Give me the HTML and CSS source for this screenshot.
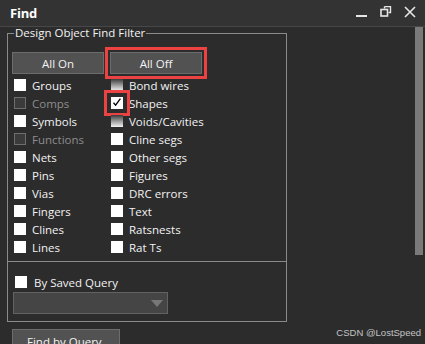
FILE: index.html
```html
<!DOCTYPE html>
<html>
<head>
	<meta charset="utf-8">
	<title>Find</title>
	<link rel="stylesheet" href="styles.css">
</head>
<body>
	<div class="win">
		<div class="titlebar">
			<span class="title">Find</span>
			<span class="tb-btns">
				<svg width="12" height="12" viewBox="0 0 12 12"><rect x="0" y="9" width="11" height="2" fill="#e6e6e6"/></svg>
				<svg width="12" height="12" viewBox="0 0 12 12"><path d="M4.5 0.5h6v6h-2M4.5 0.5v2" fill="none" stroke="#e6e6e6" stroke-width="1.4"/><rect x="1" y="3.5" width="6.5" height="6.5" fill="none" stroke="#e6e6e6" stroke-width="1.6"/></svg>
				<svg width="12" height="12" viewBox="0 0 12 12"><path d="M1 1l10 10M11 1L1 11" stroke="#e6e6e6" stroke-width="1.6"/></svg>
			</span>
		</div>
		<div class="body">
			<div class="main">
				<fieldset class="filter">
					<legend>Design Object Find Filter</legend>
					<div class="btn-row">
						<button class="btn">All On</button>
						<button class="btn mark">All Off</button>
					</div>
					<div class="checks">
						<label class="chk"><i class="box"></i>Groups</label>
						<label class="chk"><i class="box fade"></i>Bond wires</label>
						<label class="chk off"><i class="box"></i>Comps</label>
						<label class="chk"><i class="box on mark"></i>Shapes</label>
						<label class="chk"><i class="box"></i>Symbols</label>
						<label class="chk"><i class="box fade"></i>Voids/Cavities</label>
						<label class="chk off"><i class="box"></i>Functions</label>
						<label class="chk"><i class="box"></i>Cline segs</label>
						<label class="chk"><i class="box"></i>Nets</label>
						<label class="chk"><i class="box"></i>Other segs</label>
						<label class="chk"><i class="box"></i>Pins</label>
						<label class="chk"><i class="box"></i>Figures</label>
						<label class="chk"><i class="box"></i>Vias</label>
						<label class="chk"><i class="box"></i>DRC errors</label>
						<label class="chk"><i class="box"></i>Fingers</label>
						<label class="chk"><i class="box"></i>Text</label>
						<label class="chk"><i class="box"></i>Clines</label>
						<label class="chk"><i class="box"></i>Ratsnests</label>
						<label class="chk"><i class="box"></i>Lines</label>
						<label class="chk"><i class="box"></i>Rat Ts</label>
					</div>
				</fieldset>
				<div class="query">
					<label class="chk"><i class="box"></i>By Saved Query</label>
					<div class="combo"><span class="arrow"></span></div>
				</div>
				<button class="btn find">Find by Query</button>
			</div>
			<div class="scroll"><div class="thumb"></div></div>
		</div>
		<div class="credit">CSDN @LostSpeed</div>
	</div>
</body>
</html>
```

FILE: styles.css
```css
*{
	box-sizing: border-box;
}
body{
	margin: 0;
	background: #2c2c2c;
	font-family: "Open Sans", "Noto Sans", sans-serif;
	font-size: 11.5px;
	color: #f2f2f2;
}
.win{
	position: relative;
	width: 425px;
	height: 344px;
	overflow: hidden;
	background: #2c2c2c;
}
.titlebar{
	height: 27px;
	display: flex;
	align-items: center;
	justify-content: space-between;
	padding: 0 9px 1px 10px;
	background: #333;
	border-bottom: 1px solid #474747;
}
.title{
	font-weight: bold;
	font-size: 13px;
	letter-spacing: -0.2px;
	color: #fff;
}
.tb-btns{
	display: flex;
	gap: 12px;
	margin-top: -2px;
}
.tb-btns svg{
	display: block;
}
.body{
	display: flex;
}
.main{
	flex: 1;
}
.filter{
	margin: 0 0 0 7px;
	padding: 0 0 5px 0;
	width: 280px;
	border: 1px solid #8a8a8a;
	min-inline-size: 0;
}
.filter legend{
	margin-left: 6px;
	padding: 0 1px;
	line-height: 12px;
}
.btn-row{
	display: flex;
	gap: 6px;
	margin: 13px 0 0 4px;
}
.btn{
	font-family: inherit;
	font-size: 11.5px;
	color: #f2f2f2;
	background: #525252;
	border: 1px solid #6c6c6c;
	height: 22px;
	padding: 0;
}
.btn-row .btn{
	width: 92px;
}
.mark{
	outline: 3px solid #ec4242;
	outline-offset: 1px;
}
.btn.mark{
	outline-offset: 2px;
}
.checks{
	display: grid;
	grid-template-columns: 97px 1fr;
	margin: 2px 0 0 6px;
}
.chk{
	display: flex;
	align-items: center;
	gap: 6px;
	height: 18px;
}
.box{
	width: 12px;
	height: 12px;
	background: #fff;
	flex: none;
	position: relative;
}
.box.fade{
	background: linear-gradient(#3a3a3a, #9a9a9a 50%, #f4f4f4);
}
.chk.off{
	color: #8c8c8c;
}
.chk.off .box{
	background: #3b3b3b;
	border: 1px solid #6e6e6e;
}
.box.on::after{
	content: "";
	position: absolute;
	left: 2px;
	top: 1px;
	width: 8px;
	height: 8px;
	background: no-repeat center/8px 8px url("data:image/svg+xml,%3Csvg xmlns='http://www.w3.org/2000/svg' viewBox='0 0 8 8'%3E%3Cpath d='M0.5 4.8L2.6 7.2L7.4 0.6' fill='none' stroke='%23000' stroke-width='1.3'/%3E%3C/svg%3E");
}
.box.mark{
	outline-offset: 4px;
}
.query{
	margin-left: 7px;
	width: 280px;
	border: 1px solid #8a8a8a;
	border-top: 0;
	padding: 11px 0 7px 0;
}
.query .chk{
	margin-left: 7px;
	gap: 7px;
}
.combo{
	position: relative;
	margin: 1px 0 0 5px;
	width: 155px;
	height: 22px;
	background: #454545;
	border: 1px solid #626262;
}
.arrow{
	position: absolute;
	right: 4px;
	top: 7px;
	border-left: 6px solid transparent;
	border-right: 6px solid transparent;
	border-top: 7px solid #777;
}
.find{
	margin: 7px 0 0 12px;
	width: 108px;
	height: 24px;
	text-align: left;
	padding-left: 14px;
}
.scroll{
	width: 8px;
	margin: 0 2px 0 0;
	height: 228px;
}
.thumb{
	height: 100%;
	background: #7a7a7a;
}
.credit{
	position: absolute;
	right: 4px;
	bottom: 6px;
	font-family: "Liberation Sans", Arial, sans-serif;
	font-size: 9.5px;
	color: #c4c4c4;
}
```
